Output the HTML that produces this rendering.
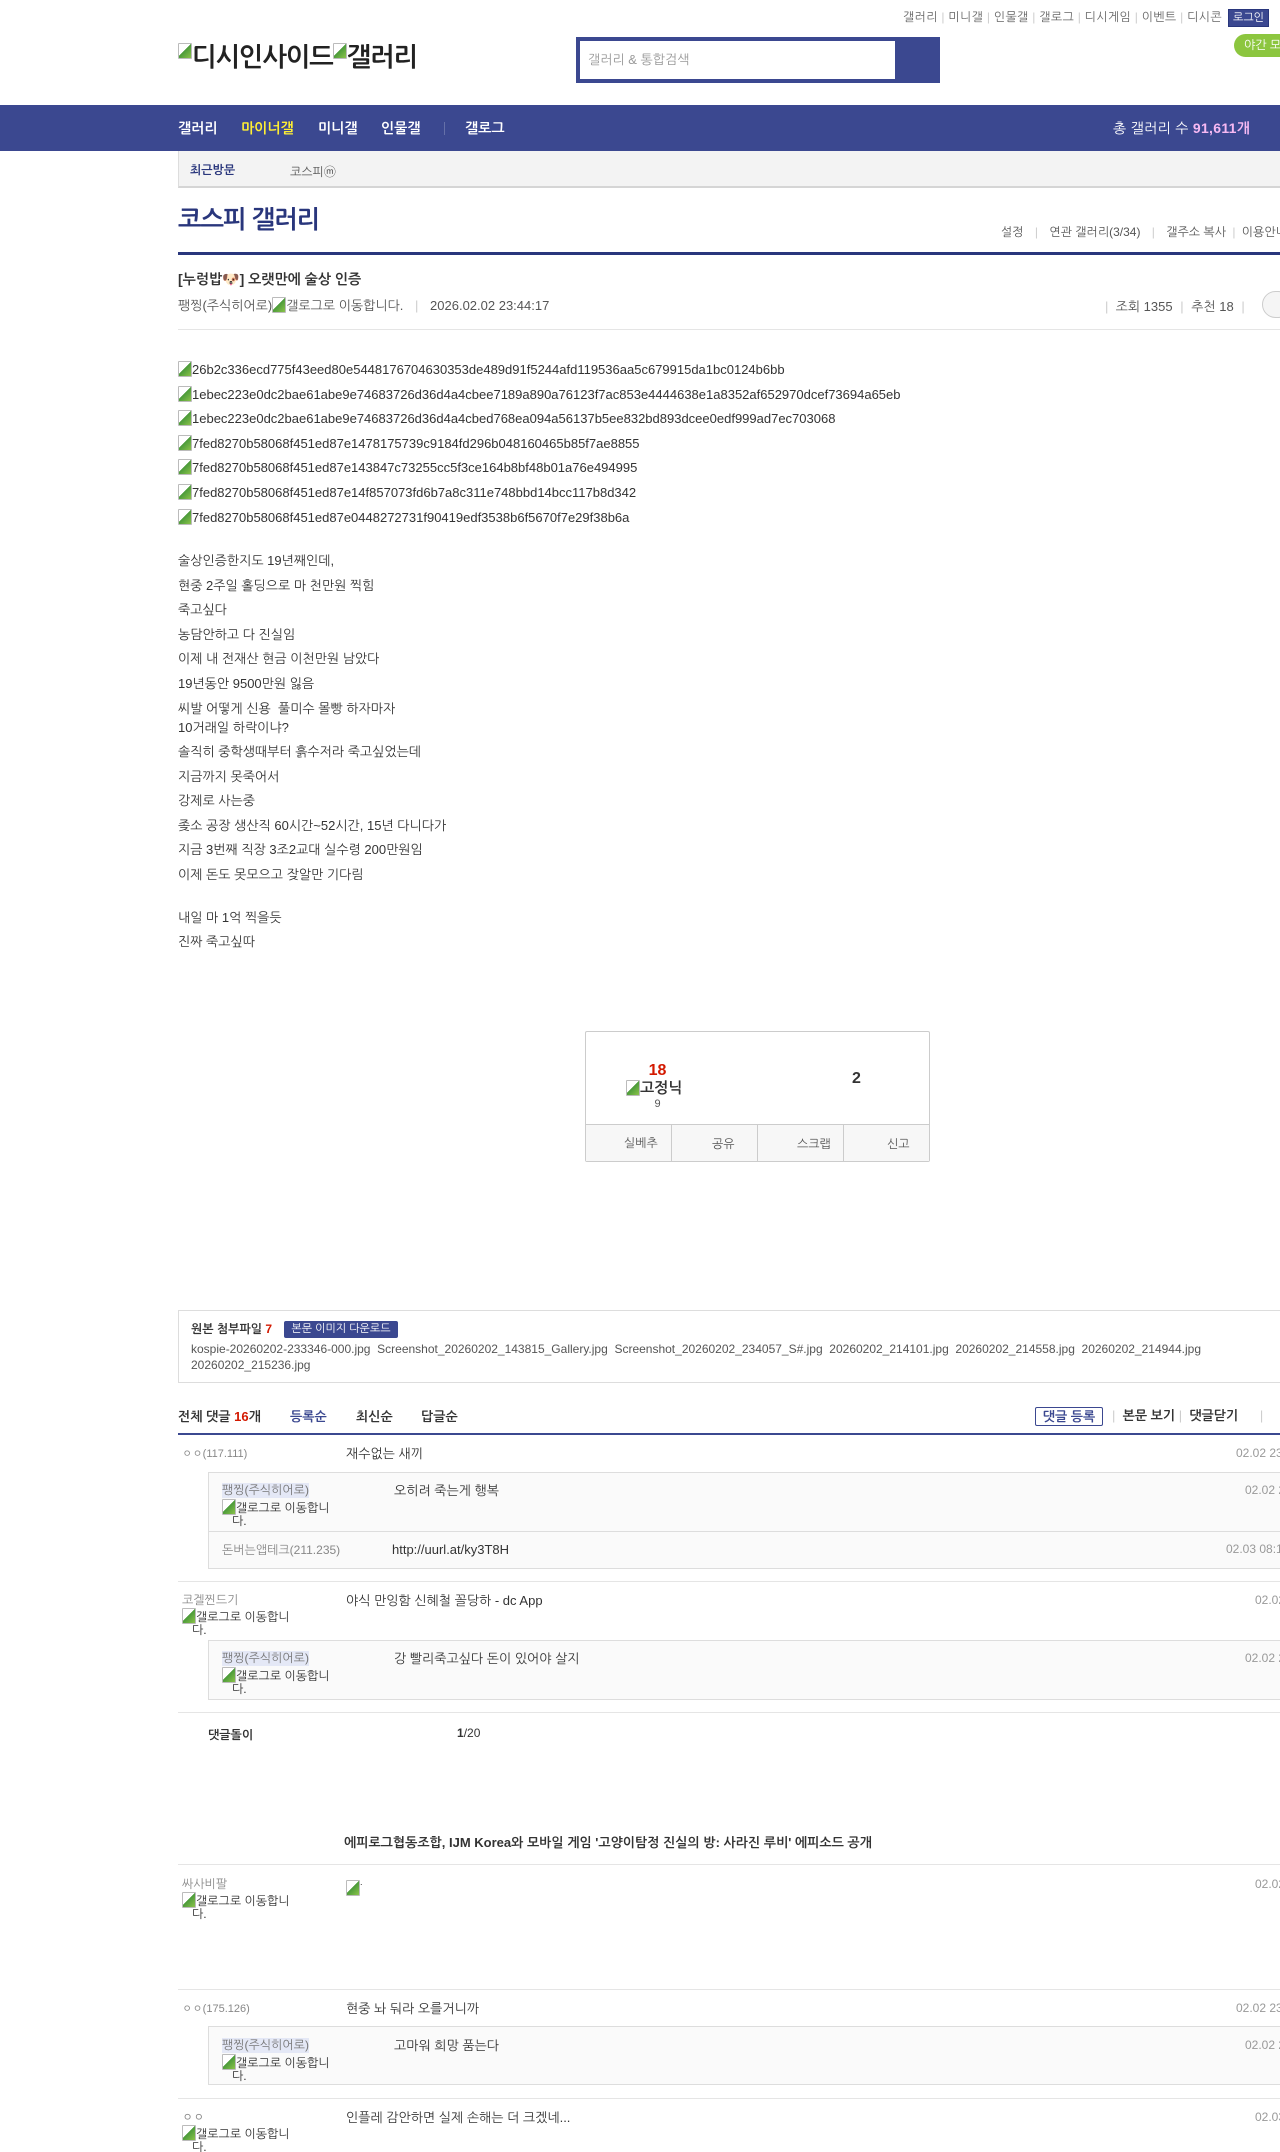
<!DOCTYPE html>
<html><head><meta charset="utf-8">
<style>
*{margin:0;padding:0;box-sizing:border-box}
html,body{width:1280px;height:2152px;overflow:hidden;background:#fff}
body{position:relative;font-family:"Liberation Sans","NanumGothic","Noto Sans CJK KR",sans-serif;color:#333;font-size:13px}
.a{position:absolute;white-space:nowrap}
.bi{display:inline-block;width:14px;height:16px;vertical-align:-3px;border:1px solid #bbb;border-radius:1px;background:linear-gradient(135deg,#fff 45%,#4a9a3a 46%,#8bc34a 100%)}
.g{color:#777}
.ln{position:absolute;left:178px;right:0;height:1px;background:#e5e5e5}
.nick2{background:#e4e8f6;color:#777;font-size:12px}
.rbox{position:absolute;left:208px;right:-10px;background:#fafafa;border:1px solid #ddd}
.alt{position:absolute;width:130px;white-space:normal;font-size:12px;line-height:13px;color:#333}
</style></head><body>
<div class="a g" style="left:903px;top:10px;font-size:12px;letter-spacing:0.3px;color:#666">갤러리 <span style="color:#ccc">|</span> 미니갤 <span style="color:#ccc">|</span> 인물갤 <span style="color:#ccc">|</span> 갤로그 <span style="color:#ccc">|</span> 디시게임 <span style="color:#ccc">|</span> 이벤트 <span style="color:#ccc">|</span> 디시콘</div>
<div class="a" style="left:1228px;top:9px;width:41px;height:18px;background:#3b4890;border:1px solid #29367c;color:#fff;font-size:11px;text-align:center;line-height:16px">로그인</div>
<div class="a" style="left:1234px;top:34px;width:60px;height:23px;background:#8cc63f;border-radius:12px;color:#fff;font-size:12px;line-height:23px;padding-left:10px">야간 모드</div>
<div class="a" style="left:178px;top:42px;font-size:26px;font-weight:bold;color:#222;letter-spacing:-1px"><span class="bi" style="vertical-align:7px"></span>디시인사이드<span class="bi" style="vertical-align:7px"></span>갤러리</div>
<div class="a" style="left:576px;top:37px;width:364px;height:46px;background:#3b4890"></div>
<div class="a" style="left:580px;top:41px;width:315px;height:38px;background:#fff;color:#999;font-size:13px;line-height:38px;padding-left:8px">갤러리 &amp; 통합검색</div>
<div class="a" style="left:0;top:105px;width:1280px;height:46px;background:#3b4890"></div>
<div class="a" style="left:178px;top:120px;color:#fff;font-size:14px;font-weight:bold">갤러리</div>
<div class="a" style="left:241px;top:120px;color:#ffef33;font-size:14px;font-weight:bold">마이너갤</div>
<div class="a" style="left:318px;top:120px;color:#fff;font-size:14px;font-weight:bold">미니갤</div>
<div class="a" style="left:381px;top:120px;color:#fff;font-size:14px;font-weight:bold">인물갤</div>
<div class="a" style="left:444px;top:122px;width:1px;height:13px;background:#6570a8"></div>
<div class="a" style="left:465px;top:120px;color:#fff;font-size:14px;font-weight:bold">갤로그</div>
<div class="a" style="left:1113px;top:120px;color:#fff;font-size:14px;letter-spacing:0.3px">총 갤러리 수 <b style="color:#f7b9f3">91,611개</b></div>
<div class="a" style="left:178px;top:151px;width:1110px;height:37px;background:#f3f3f3;border-left:1px solid #ddd;border-bottom:2px solid #d5d5d5"></div>
<div class="a" style="left:190px;top:163px;font-size:12px;font-weight:bold;color:#29367c">최근방문</div>
<div class="a" style="left:290px;top:163px;font-size:12px;color:#555">코스피ⓜ</div>
<div class="a" style="left:178px;top:206px;font-size:25px;font-weight:bold;color:#29367c;letter-spacing:-1px">코스피 갤러리</div>
<div class="a" style="left:1001px;top:225px;font-size:12px;color:#555">설정 <span style="color:#ccc;margin:0 8px">|</span> 연관 갤러리(3/34) <span style="color:#ccc;margin:0 8px">|</span> 갤주소 복사 <span style="color:#ccc;margin:0 3px">|</span> 이용안내</div>
<div class="a" style="left:178px;top:252px;width:1110px;height:3px;background:#29367c"></div>
<div class="a" style="left:178px;top:271px;font-size:14px;font-weight:bold;color:#333">[누렁밥<span style="color:#c8742a">🐶</span>] 오랫만에 술상 인증</div>
<div class="a" style="left:178px;top:297px;font-size:13px;color:#555">팽찡(주식히어로)<span class="bi"></span>갤로그로 이동합니다. <span style="color:#ccc;margin:0 8px">|</span> 2026.02.02 23:44:17</div>
<div class="a" style="left:1105px;top:299px;font-size:13px;color:#555"><span style="color:#ccc">|</span>&nbsp; 조회 1355 <span style="color:#ccc;margin:0 4px">|</span> 추천 18 <span style="color:#ccc;margin:0 4px">|</span></div>
<div class="a" style="left:1262px;top:291px;width:30px;height:27px;border:1px solid #ccc;border-radius:14px;background:#f5f5f5"></div>
<div class="ln" style="top:329px"></div>
<div class="a" style="left:178px;top:358px;font-size:13px;line-height:24.6px;color:#333">
<div><span class="bi"></span>26b2c336ecd775f43eed80e5448176704630353de489d91f5244afd119536aa5c679915da1bc0124b6bb</div>
<div><span class="bi"></span>1ebec223e0dc2bae61abe9e74683726d36d4a4cbee7189a890a76123f7ac853e4444638e1a8352af652970dcef73694a65eb</div>
<div><span class="bi"></span>1ebec223e0dc2bae61abe9e74683726d36d4a4cbed768ea094a56137b5ee832bd893dcee0edf999ad7ec703068</div>
<div><span class="bi"></span>7fed8270b58068f451ed87e1478175739c9184fd296b048160465b85f7ae8855</div>
<div><span class="bi"></span>7fed8270b58068f451ed87e143847c73255cc5f3ce164b8bf48b01a76e494995</div>
<div><span class="bi"></span>7fed8270b58068f451ed87e14f857073fd6b7a8c311e748bbd14bcc117b8d342</div>
<div><span class="bi"></span>7fed8270b58068f451ed87e0448272731f90419edf3538b6f5670f7e29f38b6a</div>
</div>
<div class="a" style="left:178px;top:549px;font-size:13px;line-height:24.5px;color:#333">
<div>술상인증한지도 19년째인데,</div>
<div>현중 2주일 홀딩으로 마 천만원 찍힘</div>
<div>죽고싶다</div>
<div>농담안하고 다 진실임</div>
<div>이제 내 전재산 현금 이천만원 남았다</div>
<div>19년동안 9500만원 잃음</div>
<div style="line-height:19px;padding-top:3px;padding-bottom:3px">씨발 어떻게 신용&nbsp; 풀미수 몰빵 하자마자<br>10거래일 하락이냐?</div>
<div>솔직히 중학생때부터 흙수저라 죽고싶었는데</div>
<div>지금까지 못죽어서</div>
<div>강제로 사는중</div>
<div>좆소 공장 생산직 60시간~52시간, 15년 다니다가</div>
<div>지금 3번째 직장 3조2교대 실수령 200만원임</div>
<div>이제 돈도 못모으고 잦알만 기다림</div>
<div>&nbsp;</div>
<div style="margin-top:-6px">내일 마 1억 찍을듯</div>
<div>진짜 죽고싶따</div>
</div>
<div class="a" style="left:585px;top:1031px;width:345px;height:131px;border:1px solid #ccc;border-radius:2px"></div>
<div class="a" style="left:586px;top:1124px;width:343px;height:37px;background:#f7f7f7;border-top:1px solid #ccc"></div>
<div class="a" style="left:671px;top:1124px;width:1px;height:37px;background:#ccc"></div>
<div class="a" style="left:757px;top:1124px;width:1px;height:37px;background:#ccc"></div>
<div class="a" style="left:843px;top:1124px;width:1px;height:37px;background:#ccc"></div>
<div class="a" style="left:625px;top:1062px;width:65px;text-align:center;font-size:16px;font-weight:bold;color:#d31900">18</div>
<div class="a" style="left:626px;top:1080px;font-size:15px;font-weight:bold;color:#333"><span class="bi"></span>고정닉</div>
<div class="a" style="left:625px;top:1098px;width:65px;text-align:center;font-size:11px;color:#555">9</div>
<div class="a" style="left:852px;top:1070px;font-size:16px;font-weight:bold;color:#333">2</div>
<div class="a" style="left:624px;top:1136px;font-size:12px;color:#555">실베추</div>
<div class="a" style="left:712px;top:1137px;font-size:12px;color:#555">공유</div>
<div class="a" style="left:797px;top:1137px;font-size:12px;color:#555">스크랩</div>
<div class="a" style="left:887px;top:1137px;font-size:12px;color:#555">신고</div>
<div class="a" style="left:178px;top:1310px;width:1120px;height:73px;border:1px solid #ddd"></div>
<div class="a" style="left:191px;top:1322px;font-size:12px;font-weight:bold;color:#333">원본 첨부파일 <span style="color:#d31900">7</span></div>
<div class="a" style="left:284px;top:1321px;width:114px;height:17px;background:#3b4890;color:#fff;font-size:11px;text-align:center;line-height:17px;border-radius:2px">본문 이미지 다운로드</div>
<div class="a" style="left:191px;top:1341px;font-size:12px;color:#555;line-height:16px">kospie-20260202-233346-000.jpg&nbsp; Screenshot_20260202_143815_Gallery.jpg&nbsp; Screenshot_20260202_234057_S#.jpg&nbsp; 20260202_214101.jpg&nbsp; 20260202_214558.jpg&nbsp; 20260202_214944.jpg<br>20260202_215236.jpg</div>
<div class="a" style="left:178px;top:1409px;font-size:13px;font-weight:bold;color:#333">전체 댓글 <span style="color:#d31900">16</span>개</div>
<div class="a" style="left:290px;top:1409px;font-size:13px;font-weight:bold;color:#3b4890">등록순</div>
<div class="a" style="left:356px;top:1409px;font-size:13px;font-weight:bold;color:#333">최신순</div>
<div class="a" style="left:421px;top:1409px;font-size:13px;font-weight:bold;color:#333">답글순</div>
<div class="a" style="left:1035px;top:1407px;width:68px;height:19px;border:1px solid #3b4890;border-radius:2px;font-size:13px;font-weight:bold;color:#3b4890;text-align:center;line-height:17px">댓글 등록</div>
<div class="a" style="left:1112px;top:1408px;font-size:13px;font-weight:bold;color:#333"><span style="color:#ccc;font-weight:normal">|</span>&nbsp; 본문 보기 <span style="color:#ccc;font-weight:normal">|</span>&nbsp; 댓글닫기 &nbsp; &nbsp; &nbsp;<span style="color:#ccc;font-weight:normal">|</span></div>
<div class="a" style="left:178px;top:1433px;width:1110px;height:2px;background:#3b4890"></div>
<div class="a" style="left:182px;top:1447px;font-size:11px;color:#888">ㅇㅇ(117.111)</div>
<div class="a" style="left:346px;top:1446px;font-size:13px">재수없는 새끼</div>
<div class="a" style="left:1236px;top:1446px;font-size:12px;color:#999">02.02 23:50:11</div>
<div class="rbox" style="top:1472px;height:97px"></div>
<div class="a" style="left:209px;top:1531px;width:1080px;height:1px;background:#ddd"></div>
<div class="a nick2" style="left:222px;top:1483px">팽찡(주식히어로)</div>
<div class="alt" style="left:222px;top:1499px"><span class="bi"></span>갤로그로 이동합니<br>&nbsp; &nbsp;다.</div>
<div class="a" style="left:394px;top:1483px;font-size:13px">오히려 죽는게 행복</div>
<div class="a" style="left:1245px;top:1483px;font-size:12px;color:#999">02.02 23:52</div>
<div class="a" style="left:222px;top:1543px;font-size:12px;color:#888">돈버는앱테크(211.235)</div>
<div class="a" style="left:392px;top:1542px;font-size:13px">http://uurl.at/ky3T8H</div>
<div class="a" style="left:1226px;top:1542px;font-size:12px;color:#999">02.03 08:16:20</div>
<div class="ln" style="top:1581px"></div>
<div class="a" style="left:182px;top:1593px;font-size:12px;color:#888">코겔찐드기</div>
<div class="alt" style="left:182px;top:1608px"><span class="bi"></span>갤로그로 이동합니<br>&nbsp; &nbsp;다.</div>
<div class="a" style="left:346px;top:1593px;font-size:13px">야식 만잉함 신혜철 꼴당하 - dc App</div>
<div class="a" style="left:1255px;top:1593px;font-size:12px;color:#999">02.02 23:55</div>
<div class="rbox" style="top:1640px;height:60px"></div>
<div class="a nick2" style="left:222px;top:1651px">팽찡(주식히어로)</div>
<div class="alt" style="left:222px;top:1667px"><span class="bi"></span>갤로그로 이동합니<br>&nbsp; &nbsp;다.</div>
<div class="a" style="left:394px;top:1651px;font-size:13px">강 빨리죽고싶다 돈이 있어야 살지</div>
<div class="a" style="left:1245px;top:1651px;font-size:12px;color:#999">02.02 23:56</div>
<div class="ln" style="top:1712px"></div>
<div class="a" style="left:208px;top:1728px;font-size:12px;font-weight:bold">댓글돌이</div>
<div class="a" style="left:457px;top:1726px;font-size:12px"><b>1</b>/20</div>
<div class="a" style="left:344px;top:1835px;font-size:13px;font-weight:bold">에피로그협동조합, IJM Korea와 모바일 게임 '고양이탐정 진실의 방: 사라진 루비' 에피소드 공개</div>
<div class="ln" style="top:1864px"></div>
<div class="a" style="left:182px;top:1877px;font-size:12px;color:#888">싸사비팔</div>
<div class="alt" style="left:182px;top:1892px"><span class="bi"></span>갤로그로 이동합니<br>&nbsp; &nbsp;다.</div>
<div class="a" style="left:346px;top:1877px"><span class="bi"></span><span style="font-size:9px;vertical-align:8px">.</span></div>
<div class="a" style="left:1255px;top:1877px;font-size:12px;color:#999">02.02 23:58</div>
<div class="ln" style="top:1989px"></div>
<div class="a" style="left:182px;top:2002px;font-size:11px;color:#888">ㅇㅇ(175.126)</div>
<div class="a" style="left:346px;top:2001px;font-size:13px">현중 놔 둬라 오를거니까</div>
<div class="a" style="left:1236px;top:2001px;font-size:12px;color:#999">02.02 23:59:02</div>
<div class="rbox" style="top:2026px;height:59px"></div>
<div class="a nick2" style="left:222px;top:2038px">팽찡(주식히어로)</div>
<div class="alt" style="left:222px;top:2054px"><span class="bi"></span>갤로그로 이동합니<br>&nbsp; &nbsp;다.</div>
<div class="a" style="left:394px;top:2038px;font-size:13px">고마워 희망 품는다</div>
<div class="a" style="left:1245px;top:2038px;font-size:12px;color:#999">02.02 23:59</div>
<div class="ln" style="top:2098px"></div>
<div class="a" style="left:182px;top:2110px;font-size:12px;color:#888">ㅇㅇ</div>
<div class="alt" style="left:182px;top:2125px"><span class="bi"></span>갤로그로 이동합니<br>&nbsp; &nbsp;다.</div>
<div class="a" style="left:346px;top:2110px;font-size:13px">인플레 감안하면 실제 손해는 더 크겠네...</div>
<div class="a" style="left:1255px;top:2110px;font-size:12px;color:#999">02.03 00:01</div>
</body></html>
